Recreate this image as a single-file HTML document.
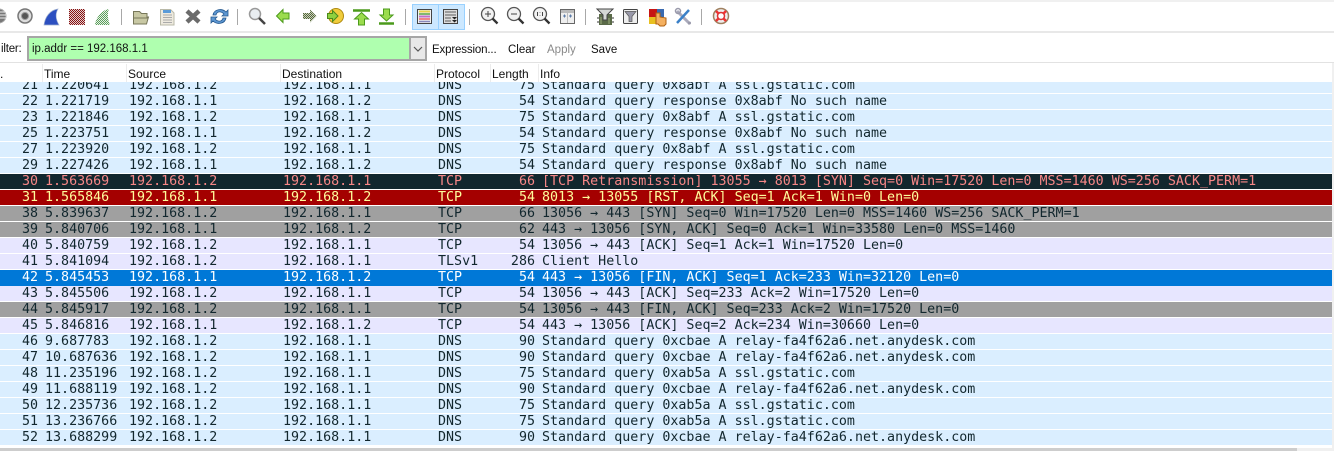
<!DOCTYPE html>
<html><head><meta charset="utf-8"><style>
html,body{margin:0;padding:0;background:#fff}
#p{position:relative;width:1334px;height:451px;overflow:hidden;background:#fff;font-family:"Liberation Sans",sans-serif}
.a{position:absolute}
.t{position:absolute;font-size:11.5px;line-height:16px;color:#111;white-space:nowrap}
.h{position:absolute;top:66px;font-size:12px;line-height:16px;color:#111;white-space:nowrap}
.v{position:absolute;top:64px;width:1px;height:18px;background:#ececec}
.r{position:absolute;left:0;width:1332px;height:15px;font-family:"DejaVu Sans Mono","Liberation Mono",monospace;font-size:13.33px;line-height:13px;white-space:pre;color:#12272e}
.r span{position:absolute;top:1px}
.r span:nth-child(1){right:1294px}
.r span:nth-child(2){left:45px}
.r span:nth-child(3){left:129px}
.r span:nth-child(4){left:283px}
.r span:nth-child(5){left:438px}
.r span:nth-child(6){right:797px}
.r span:nth-child(7){left:542px}
.d{background:#daeeff}.l{background:#e7e6ff}.g{background:#a0a0a0}
.k{background:#12272e;color:#f78787}.e{background:#a40000;color:#fffc9c}.s{background:#0078d7;color:#fff}
</style></head><body><div id="p">
<div class="a" style="left:0;top:0;width:1334px;height:2px;background:#f0f0f0"></div>
<div class="a" style="left:0;top:31px;width:1334px;height:2px;background:#e8e8e8"></div>
<div class="a" style="left:412px;top:4px;width:25px;height:24px;background:#cce8ff;border:1px solid #99d1ff"></div>
<div class="a" style="left:438px;top:4px;width:25px;height:24px;background:#cce8ff;border:1px solid #99d1ff"></div>
<svg class="a" style="left:0;top:0" width="760" height="32" viewBox="0 0 760 32" fill="none">
<defs>
<pattern id="m" width="2" height="2" patternUnits="userSpaceOnUse"><rect width="2" height="2" fill="#e0d0d0"/><rect width="1" height="1" fill="#8a1010"/><rect x="1" y="1" width="1" height="1" fill="#8a1010"/></pattern>
<pattern id="n" width="2" height="2" patternUnits="userSpaceOnUse"><rect width="2" height="2" fill="#e8efe8"/><rect width="1" height="1" fill="#5aa05a"/><rect x="1" y="1" width="1" height="1" fill="#5aa05a"/></pattern>
<pattern id="o" width="2" height="2" patternUnits="userSpaceOnUse"><rect width="2" height="2" fill="#c9d2b8"/><rect width="1" height="1" fill="#55653f"/><rect x="1" y="1" width="1" height="1" fill="#55653f"/></pattern>
</defs>
<circle cx="-1" cy="16" r="7" fill="#777" stroke="#aaa"/><path d="M0 12h5M0 15h6M0 18h6" stroke="#eee"/>
<circle cx="25" cy="16" r="7" fill="#ddd" stroke="#777" stroke-width="1.5"/><circle cx="25" cy="16" r="3.5" fill="#555" stroke="#999"/>
<path d="M44 25C45 17 50 10 58 9C55 14 56 20 59 25Z" fill="#2c4fc0" stroke="#9fb0d0" stroke-width=".7"/>
<rect x="69" y="9" width="16" height="16" fill="url(#m)"/>
<path d="M95 25C96 17 102 10 109 9C107 14 108 20 110 25Z" fill="url(#n)"/>
<path d="M121.500 9v16M237.500 9v16M405.500 9v16M469.500 9v16M585.500 9v16M701.500 9v16" stroke="#a8a8a8"/>
<path d="M133.500 24V11.500h6l2 2h5.500V17h1.500l-2 7Z" fill="#c8c8a4" stroke="#77775a"/><path d="M134 18h14" stroke="#77775a"/>
<path d="M160.500 9.500h10l3.500 3.500v12h-13.500Z" fill="#eeeadf" stroke="#b9b9a8"/><path d="M163 10h8v3h-8Z" fill="#5b9bd8"/><path d="M163 15h9M163 17.500h9M163 20h9M163 22.500h9" stroke="#aaa"/>
<path d="M187 11l12 11M199 11l-12 11" stroke="#6b6b6b" stroke-width="4.500"/>
<path d="M213 15C214 9 222 8 226 12l2-2v6h-6l2-2C221 11 217 11 216 15Z" fill="#5d97d2" stroke="#24588f" stroke-width=".8"/><path d="M226 18C225 24 217 25 213 21l-2 2v-6h6l-2 2C218 22 222 22 223 18Z" fill="#5d97d2" stroke="#24588f" stroke-width=".8"/>
<circle cx="255" cy="14" r="5.500" fill="#e9eef2" stroke="#999" stroke-width="1.500"/><path d="M259 18l6 6" stroke="#444" stroke-width="2.500"/>
<path d="M276.500 16l6.500-6.500V13h6v6h-6v3.500Z" fill="#9bdc4e" stroke="#4b9a1b"/>
<path d="M316.500 16l-6.500-6.500V13h-7v6h7v3.500Z" fill="url(#o)"/>
<circle cx="336" cy="16" r="7.500" fill="#f0cc3c" stroke="#b08a10"/><path d="M338 16l-5.500-5.500v3h-5v5h5v3Z" fill="#8ed13f" stroke="#4b8a1b"/>
<path d="M353 10.500h17" stroke="#4b9a1b" stroke-width="2.500"/><path d="M361.500 12.500l7 6.500h-4v6h-6v-6h-4Z" fill="#9bdc4e" stroke="#4b9a1b"/>
<path d="M379 23.500h15" stroke="#4b9a1b" stroke-width="2.500"/><path d="M386.500 21l6.500-6h-3.500V9h-6v6H380Z" fill="#9bdc4e" stroke="#4b9a1b"/>
<rect x="417.500" y="9.500" width="14" height="14" fill="#f2f2f2" stroke="#444"/><path d="M419 11.500h11" stroke="#e8d44c" stroke-width="2"/><path d="M419 14h11" stroke="#80b870" stroke-width="2"/><path d="M419 16.500h11" stroke="#c070c8" stroke-width="2"/><path d="M419 19h11" stroke="#e88" stroke-width="2"/><path d="M419 21.500h11" stroke="#88b" stroke-width="1.500"/>
<rect x="443.500" y="9.500" width="14" height="14" fill="#ddd" stroke="#444"/><path d="M445 12h11M445 15h11M445 18h6M445 21h6" stroke="#888" stroke-width="1.500"/><path d="M452 17h5l-2.500 2.500ZM452 20h5l-2.500 2.500Z" fill="#222"/>
<circle cx="488" cy="14" r="6.500" fill="#f2f2f2" stroke="#555" stroke-width="1.300"/><path d="M492.500 18.500l5 5" stroke="#333" stroke-width="2.300"/><path d="M485 14h6M488 11v6" stroke="#444"/>
<circle cx="514" cy="14" r="6.500" fill="#f2f2f2" stroke="#555" stroke-width="1.300"/><path d="M518.500 18.500l5 5" stroke="#333" stroke-width="2.300"/><path d="M511 14h6" stroke="#444"/>
<circle cx="540" cy="14" r="6.500" fill="#f2f2f2" stroke="#555" stroke-width="1.300"/><path d="M544.500 18.500l5 5" stroke="#333" stroke-width="2.300"/><path d="M537.500 12v4M540 12.500v.5M540 15v.5M542.500 12v4" stroke="#444"/>
<rect x="560.500" y="9.500" width="14" height="14" fill="#eee" stroke="#666"/><path d="M561 10h13v3h-13Z" fill="#bbb"/><path d="M563 16h3M569 16h3M564.500 14.500v3M570.500 14.500v3" stroke="#5b7ba8"/><path d="M567.500 10v13" stroke="#bbb"/>
<rect x="599" y="14" width="13" height="11" fill="#5a6a48"/><path d="M597 9h16l-6 6v5h-4v-5Z" fill="#d4d8d4" stroke="#444"/><path d="M601 17v7M609 18v6" stroke="#a0b080"/><path d="M597 18h2M597 22h2M612 18h2M612 22h2" stroke="#333"/>
<rect x="623.500" y="9.500" width="14" height="14" rx="1" fill="#eee" stroke="#444"/><path d="M625 11.500h11l-4 5v5h-3v-5Z" fill="#99a" stroke="#555" stroke-width=".7"/>
<rect x="649" y="9" width="8" height="8" fill="#c71414"/><rect x="657" y="9" width="7" height="8" fill="#3a6ab0"/><rect x="649" y="17" width="8" height="7" fill="#e8c020"/><rect x="657" y="17" width="7" height="7" fill="#eee"/>
<path d="M656 13v11h2l2 2h4l2-2v-6l-6-1v-4Z" fill="#f4b060" stroke="#b06010"/>
<path d="M677 11l13 13" stroke="#aab" stroke-width="3"/><path d="M689 10l-12 13" stroke="#3a80c8" stroke-width="2.500"/><circle cx="678" cy="11" r="2.500" stroke="#99a" stroke-width="1.500"/><circle cx="689.500" cy="23" r="1.500" fill="#99a"/>
<circle cx="721" cy="16" r="7.500" fill="#eee" stroke="#a08060" stroke-width="1.500"/><circle cx="721" cy="16" r="3.500" fill="#fff" stroke="#d33" stroke-width="1.500"/><path d="M716 11l2.500 2.500M726 11l-2.500 2.500M716 21l2.500-2.500M726 21l-2.500-2.500" stroke="#e33" stroke-width="2.500"/>
</svg>

<div class="t" style="left:1px;top:41px;letter-spacing:-.2px">ilter:</div>
<div class="a" style="left:27px;top:36px;width:380px;height:21px;background:#afffaf;border:2px solid #a6a6a6;border-right:0"></div>
<div class="t" style="left:32px;top:41px">ip.addr == 192.168.1.1</div>
<div class="a" style="left:409px;top:36px;width:14px;height:21px;background:#e8e8e8;border:2px solid #a6a6a6"></div>
<svg class="a" style="left:409px;top:36px" width="18" height="25" fill="none"><path d="M5 11l4 4 4-4" stroke="#555" stroke-width="1.200"/></svg>
<div class="t" style="left:432px;top:42px;letter-spacing:-.15px">Expression...</div>
<div class="t" style="left:508px;top:42px">Clear</div>
<div class="t" style="left:547px;top:42px;color:#8a8a8a">Apply</div>
<div class="t" style="left:591px;top:42px">Save</div>
<div class="a" style="left:0;top:62px;width:1334px;height:1px;background:#e2e2e2"></div>

<div class="r d" style="top:78px"><span>21</span><span>1.220641</span><span>192.168.1.2</span><span>192.168.1.1</span><span>DNS</span><span>75</span><span>Standard query 0x8abf A ssl.gstatic.com</span></div>
<div class="r d" style="top:94px"><span>22</span><span>1.221719</span><span>192.168.1.1</span><span>192.168.1.2</span><span>DNS</span><span>54</span><span>Standard query response 0x8abf No such name</span></div>
<div class="r d" style="top:110px"><span>23</span><span>1.221846</span><span>192.168.1.2</span><span>192.168.1.1</span><span>DNS</span><span>75</span><span>Standard query 0x8abf A ssl.gstatic.com</span></div>
<div class="r d" style="top:126px"><span>25</span><span>1.223751</span><span>192.168.1.1</span><span>192.168.1.2</span><span>DNS</span><span>54</span><span>Standard query response 0x8abf No such name</span></div>
<div class="r d" style="top:142px"><span>27</span><span>1.223920</span><span>192.168.1.2</span><span>192.168.1.1</span><span>DNS</span><span>75</span><span>Standard query 0x8abf A ssl.gstatic.com</span></div>
<div class="r d" style="top:158px"><span>29</span><span>1.227426</span><span>192.168.1.1</span><span>192.168.1.2</span><span>DNS</span><span>54</span><span>Standard query response 0x8abf No such name</span></div>
<div class="r k" style="top:174px"><span>30</span><span>1.563669</span><span>192.168.1.2</span><span>192.168.1.1</span><span>TCP</span><span>66</span><span>[TCP Retransmission] 13055 → 8013 [SYN] Seq=0 Win=17520 Len=0 MSS=1460 WS=256 SACK_PERM=1</span></div>
<div class="r e" style="top:190px"><span>31</span><span>1.565846</span><span>192.168.1.1</span><span>192.168.1.2</span><span>TCP</span><span>54</span><span>8013 → 13055 [RST, ACK] Seq=1 Ack=1 Win=0 Len=0</span></div>
<div class="r g" style="top:206px"><span>38</span><span>5.839637</span><span>192.168.1.2</span><span>192.168.1.1</span><span>TCP</span><span>66</span><span>13056 → 443 [SYN] Seq=0 Win=17520 Len=0 MSS=1460 WS=256 SACK_PERM=1</span></div>
<div class="r g" style="top:222px"><span>39</span><span>5.840706</span><span>192.168.1.1</span><span>192.168.1.2</span><span>TCP</span><span>62</span><span>443 → 13056 [SYN, ACK] Seq=0 Ack=1 Win=33580 Len=0 MSS=1460</span></div>
<div class="r l" style="top:238px"><span>40</span><span>5.840759</span><span>192.168.1.2</span><span>192.168.1.1</span><span>TCP</span><span>54</span><span>13056 → 443 [ACK] Seq=1 Ack=1 Win=17520 Len=0</span></div>
<div class="r l" style="top:254px"><span>41</span><span>5.841094</span><span>192.168.1.2</span><span>192.168.1.1</span><span>TLSv1</span><span>286</span><span>Client Hello</span></div>
<div class="r s" style="top:270px;height:16px"><span>42</span><span>5.845453</span><span>192.168.1.1</span><span>192.168.1.2</span><span>TCP</span><span>54</span><span>443 → 13056 [FIN, ACK] Seq=1 Ack=233 Win=32120 Len=0</span></div>
<div class="r l" style="top:286px"><span>43</span><span>5.845506</span><span>192.168.1.2</span><span>192.168.1.1</span><span>TCP</span><span>54</span><span>13056 → 443 [ACK] Seq=233 Ack=2 Win=17520 Len=0</span></div>
<div class="r g" style="top:302px"><span>44</span><span>5.845917</span><span>192.168.1.2</span><span>192.168.1.1</span><span>TCP</span><span>54</span><span>13056 → 443 [FIN, ACK] Seq=233 Ack=2 Win=17520 Len=0</span></div>
<div class="r l" style="top:318px"><span>45</span><span>5.846816</span><span>192.168.1.1</span><span>192.168.1.2</span><span>TCP</span><span>54</span><span>443 → 13056 [ACK] Seq=2 Ack=234 Win=30660 Len=0</span></div>
<div class="r d" style="top:334px"><span>46</span><span>9.687783</span><span>192.168.1.2</span><span>192.168.1.1</span><span>DNS</span><span>90</span><span>Standard query 0xcbae A relay-fa4f62a6.net.anydesk.com</span></div>
<div class="r d" style="top:350px"><span>47</span><span>10.687636</span><span>192.168.1.2</span><span>192.168.1.1</span><span>DNS</span><span>90</span><span>Standard query 0xcbae A relay-fa4f62a6.net.anydesk.com</span></div>
<div class="r d" style="top:366px"><span>48</span><span>11.235196</span><span>192.168.1.2</span><span>192.168.1.1</span><span>DNS</span><span>75</span><span>Standard query 0xab5a A ssl.gstatic.com</span></div>
<div class="r d" style="top:382px"><span>49</span><span>11.688119</span><span>192.168.1.2</span><span>192.168.1.1</span><span>DNS</span><span>90</span><span>Standard query 0xcbae A relay-fa4f62a6.net.anydesk.com</span></div>
<div class="r d" style="top:398px"><span>50</span><span>12.235736</span><span>192.168.1.2</span><span>192.168.1.1</span><span>DNS</span><span>75</span><span>Standard query 0xab5a A ssl.gstatic.com</span></div>
<div class="r d" style="top:414px"><span>51</span><span>13.236766</span><span>192.168.1.2</span><span>192.168.1.1</span><span>DNS</span><span>75</span><span>Standard query 0xab5a A ssl.gstatic.com</span></div>
<div class="r d" style="top:430px"><span>52</span><span>13.688299</span><span>192.168.1.2</span><span>192.168.1.1</span><span>DNS</span><span>90</span><span>Standard query 0xcbae A relay-fa4f62a6.net.anydesk.com</span></div>

<div class="a" style="left:0;top:63px;width:1334px;height:19px;background:#fff"></div>
<div class="v" style="left:42px"></div><div class="v" style="left:126px"></div><div class="v" style="left:280px"></div><div class="v" style="left:434px"></div><div class="v" style="left:490px"></div><div class="v" style="left:538px"></div>
<div class="h" style="left:0">.</div>
<div class="h" style="left:44px">Time</div>
<div class="h" style="left:128px">Source</div>
<div class="h" style="left:282px">Destination</div>
<div class="h" style="left:436px">Protocol</div>
<div class="h" style="left:492px">Length</div>
<div class="h" style="left:540px">Info</div>

<div class="a" style="left:1332px;top:63px;width:2px;height:388px;background:#f0f0f0"></div>
<div class="a" style="left:0;top:448px;width:1334px;height:3px;background:#f0f0f0"></div>
<div class="a" style="left:0;top:448px;width:1297px;height:3px;background:#cdcdcd"></div>
</div></body></html>
